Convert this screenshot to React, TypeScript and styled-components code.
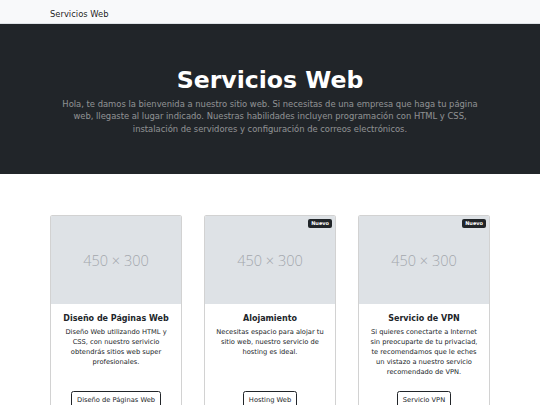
import styled, { createGlobalStyle } from "styled-components";

const GlobalStyle = createGlobalStyle`
  * {
    box-sizing: border-box;
  }
  body {
    margin: 0;
    font-family: "DejaVu Sans", Verdana, sans-serif;
    color: #212529;
    background: #fff;
  }
`;

const Navbar = styled.nav`
  height: 24px;
  background: #f8f9fa;
  border-bottom: 1px solid #dee2e6;
  display: flex;
  align-items: center;
  padding-bottom: 1px;
`;

const Container = styled.div`
  width: 440px;
  margin: 0 auto;
`;

const Brand = styled.span`
  font-size: 8.4px;
  color: rgba(0, 0, 0, 0.9);
`;

const Hero = styled.header`
  background: #212529;
  height: 150px;
  display: flex;
  flex-direction: column;
  align-items: center;
  justify-content: center;
  text-align: center;
  padding-top: 4px;
`;

const HeroTitle = styled.h1`
  margin: 0 0 3px;
  font-size: 23.6px;
  font-weight: bold;
  line-height: 1.2;
  color: #fff;
`;

const Lead = styled.p`
  margin: 0;
  width: 430px;
  font-size: 8.4px;
  line-height: 12.6px;
  color: rgba(255, 255, 255, 0.5);
`;

const Section = styled.section`
  padding-top: 41px;
`;

const Grid = styled.div`
  display: grid;
  grid-template-columns: repeat(3, 132px);
  gap: 22px;
`;

const Card = styled.div`
  position: relative;
  display: flex;
  flex-direction: column;
  border: 1px solid rgba(0, 0, 0, 0.175);
  border-radius: 2.5px;
  overflow: hidden;
  background: #fff;
`;

const Placeholder = styled.div`
  height: 88px;
  background: #dee2e6;
  display: flex;
  align-items: center;
  justify-content: center;
  font-size: 14.5px;
  font-weight: 300;
  color: #a3a7ad;
  font-family: "Open Sans", "DejaVu Sans", sans-serif;
`;

const Badge = styled.span`
  position: absolute;
  top: 3px;
  right: 3px;
  background: #212529;
  color: #fff;
  font-size: 5px;
  font-weight: bold;
  line-height: 1;
  padding: 2px 3px;
  border-radius: 2px;
`;

const Body = styled.div`
  flex: 1;
  padding: 10px 8px 6px;
  text-align: center;
`;

const CardTitle = styled.h5`
  margin: 0 0 3px;
  font-size: 8px;
  font-weight: bold;
  line-height: 10px;
  white-space: nowrap;
`;

const CardText = styled.p`
  margin: 0;
  font-size: 6.7px;
  line-height: 10px;
`;

const Footer = styled.div`
  padding: 10px;
  padding-top: 8px;
  display: flex;
  justify-content: center;
`;

const OutlineButton = styled.a`
  display: inline-block;
  border: 1px solid #212529;
  border-radius: 2.5px;
  padding: 2.5px 5px;
  font-size: 6.7px;
  line-height: 10px;
  color: #212529;
  text-decoration: none;
`;

const services = [
  {
    title: "Diseño de Páginas Web",
    text: "Diseño Web utilizando HTML y CSS, con nuestro serivicio obtendrás sitios web super profesionales.",
    button: "Diseño de Páginas Web",
    isNew: false,
  },
  {
    title: "Alojamiento",
    text: "Necesitas espacio para alojar tu sitio web, nuestro servicio de hosting es ideal.",
    button: "Hosting Web",
    isNew: true,
  },
  {
    title: "Servicio de VPN",
    text: "Si quieres conectarte a Internet sin preocuparte de tu privaciad, te recomendamos que le eches un vistazo a nuestro servicio recomendado de VPN.",
    button: "Servicio VPN",
    isNew: true,
  },
];

const App = () => {
  return (
    <>
      <GlobalStyle />
      <Navbar>
        <Container>
          <Brand>Servicios Web</Brand>
        </Container>
      </Navbar>
      <Hero>
        <HeroTitle>Servicios Web</HeroTitle>
        <Lead>
          Hola, te damos la bienvenida a nuestro sitio web. Si necesitas de una
          empresa que haga tu página web, llegaste al lugar indicado. Nuestras
          habilidades incluyen programación con HTML y CSS, instalación de
          servidores y configuración de correos electrónicos.
        </Lead>
      </Hero>
      <Section>
        <Container>
          <Grid>
            {services.map((s) => (
              <Card key={s.title}>
                {s.isNew ? <Badge>Nuevo</Badge> : null}
                <Placeholder>450 × 300</Placeholder>
                <Body>
                  <CardTitle>{s.title}</CardTitle>
                  <CardText>{s.text}</CardText>
                </Body>
                <Footer>
                  <OutlineButton href="#">{s.button}</OutlineButton>
                </Footer>
              </Card>
            ))}
          </Grid>
        </Container>
      </Section>
    </>
  );
};

export default App;
